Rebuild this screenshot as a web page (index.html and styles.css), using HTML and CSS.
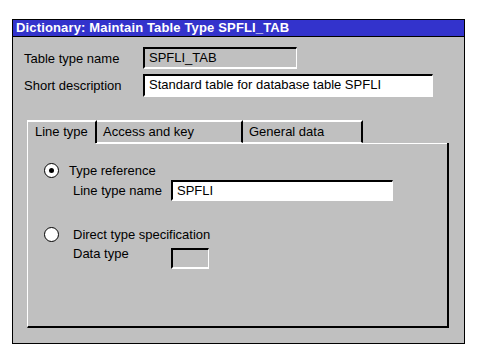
FILE: index.html
```html
<!DOCTYPE html>
<html lang="en">
<head>
    <meta charset="UTF-8">
    <title>Dictionary: Maintain Table Type SPFLI_TAB</title>
    <link rel="stylesheet" href="styles.css">
</head>
<body>
    <div class="window">
        <div class="title-bar">Dictionary: Maintain Table Type SPFLI_TAB</div>

        <div class="content">
            <div class="form-row">
                <span class="label">Table type name</span>
                <span class="field readonly short">SPFLI_TAB</span>
            </div>
            <div class="form-row">
                <span class="label">Short description</span>
                <span class="field long">Standard table for database table SPFLI</span>
            </div>

            <div class="tabs">
                <div class="tab active tab-line">Line type</div>
                <div class="tab tab-access">Access and key</div>
                <div class="tab tab-general">General data</div>
            </div>
            <div class="panel">
                <div class="radio-row first">
                    <span class="radio checked"></span>
                    <span>Type reference</span>
                </div>
                <div class="sub-row">
                    <span class="sub-label">Line type name</span>
                    <span class="field name">SPFLI</span>
                </div>
                <div class="radio-row second">
                    <span class="radio"></span>
                    <span class="radio-text">Direct type specification</span>
                </div>
                <div class="sub-row data">
                    <span class="sub-label">Data type</span>
                    <span class="field readonly tiny"></span>
                </div>
            </div>
        </div>
    </div>
</body>
</html>
```

FILE: styles.css
```css
body {
    margin: 0;
    padding: 19px 0 0 12px;
    background: #fff;
    font-family: "Liberation Sans", Arial, sans-serif;
    font-size: 13px;
    color: #000;
}
.window {
    width: 451px;
    height: 323px;
    border: 1px solid #000;
    background: #c0c0c0;
}
.title-bar {
    height: 16px;
    line-height: 16px;
    background: #3333cc;
    color: #fff;
    font-weight: bold;
    font-size: 13px;
    letter-spacing: 0.15px;
    padding-left: 3px;
    border-bottom: 1px solid #000;
    white-space: nowrap;
}
.content {
    padding: 10px 0 0 14px;
}
.form-row {
    display: flex;
    align-items: center;
    height: 22px;
    margin-bottom: 5px;
}
.label {
    width: 119px;
    margin-left: -3px;
}
.field {
    box-sizing: border-box;
    height: 22px;
    line-height: 18px;
    padding-left: 4px;
    background: #fff;
    border-top: 2px solid #000;
    border-left: 2px solid #000;
    border-right: 1px solid #fff;
    border-bottom: 2px solid #fff;
    white-space: nowrap;
}
.readonly {
    background: #c0c0c0;
}
.short {
    width: 154px;
}
.long {
    width: 290px;
    height: 23px;
}
.tabs {
    display: flex;
    margin-top: 24px;
    height: 23px;
}
.tab {
    box-sizing: border-box;
    height: 23px;
    line-height: 20px;
    border-top: 2px solid #fff;
    border-right: 2px solid #000;
    border-bottom: 1px solid #fff;
    padding-left: 6px;
}
.tab.active {
    border-left: 1px solid #fff;
    border-bottom: none;
    padding-left: 7px;
}
.tab-line {
    width: 70px;
}
.tab-access {
    width: 146px;
}
.tab-general {
    width: 120px;
}
.panel {
    box-sizing: border-box;
    width: 422px;
    height: 185px;
    border-left: 1px solid #fff;
    border-right: 2px solid #000;
    border-bottom: 2px solid #000;
    padding: 20px 0 0 16px;
    position: relative;
}
.panel::before {
    content: "";
    position: absolute;
    top: 0;
    left: 68px;
    right: 0;
    border-top: 1px solid #fff;
}
.radio-row {
    display: flex;
    align-items: center;
    height: 15px;
}
.radio {
    box-sizing: border-box;
    width: 15px;
    height: 15px;
    border: 1px solid #000;
    border-radius: 50%;
    background: #fff;
    margin-right: 10px;
    position: relative;
}
.radio.checked::after {
    content: "";
    position: absolute;
    left: 4px;
    top: 4px;
    width: 5px;
    height: 5px;
    border-radius: 50%;
    background: #000;
}
.radio-text {
    margin-left: 4px;
}
.sub-row {
    display: flex;
    align-items: center;
    margin: 2px 0 0 29px;
}
.sub-label {
    width: 98px;
}
.name {
    width: 222px;
    height: 21px;
    line-height: 17px;
}
.second {
    margin-top: 26px;
}
.data {
    margin-top: 6px;
    align-items: flex-start;
}
.data .sub-label {
    margin-top: -2px;
}
.tiny {
    width: 38px;
    height: 21px;
}
```
